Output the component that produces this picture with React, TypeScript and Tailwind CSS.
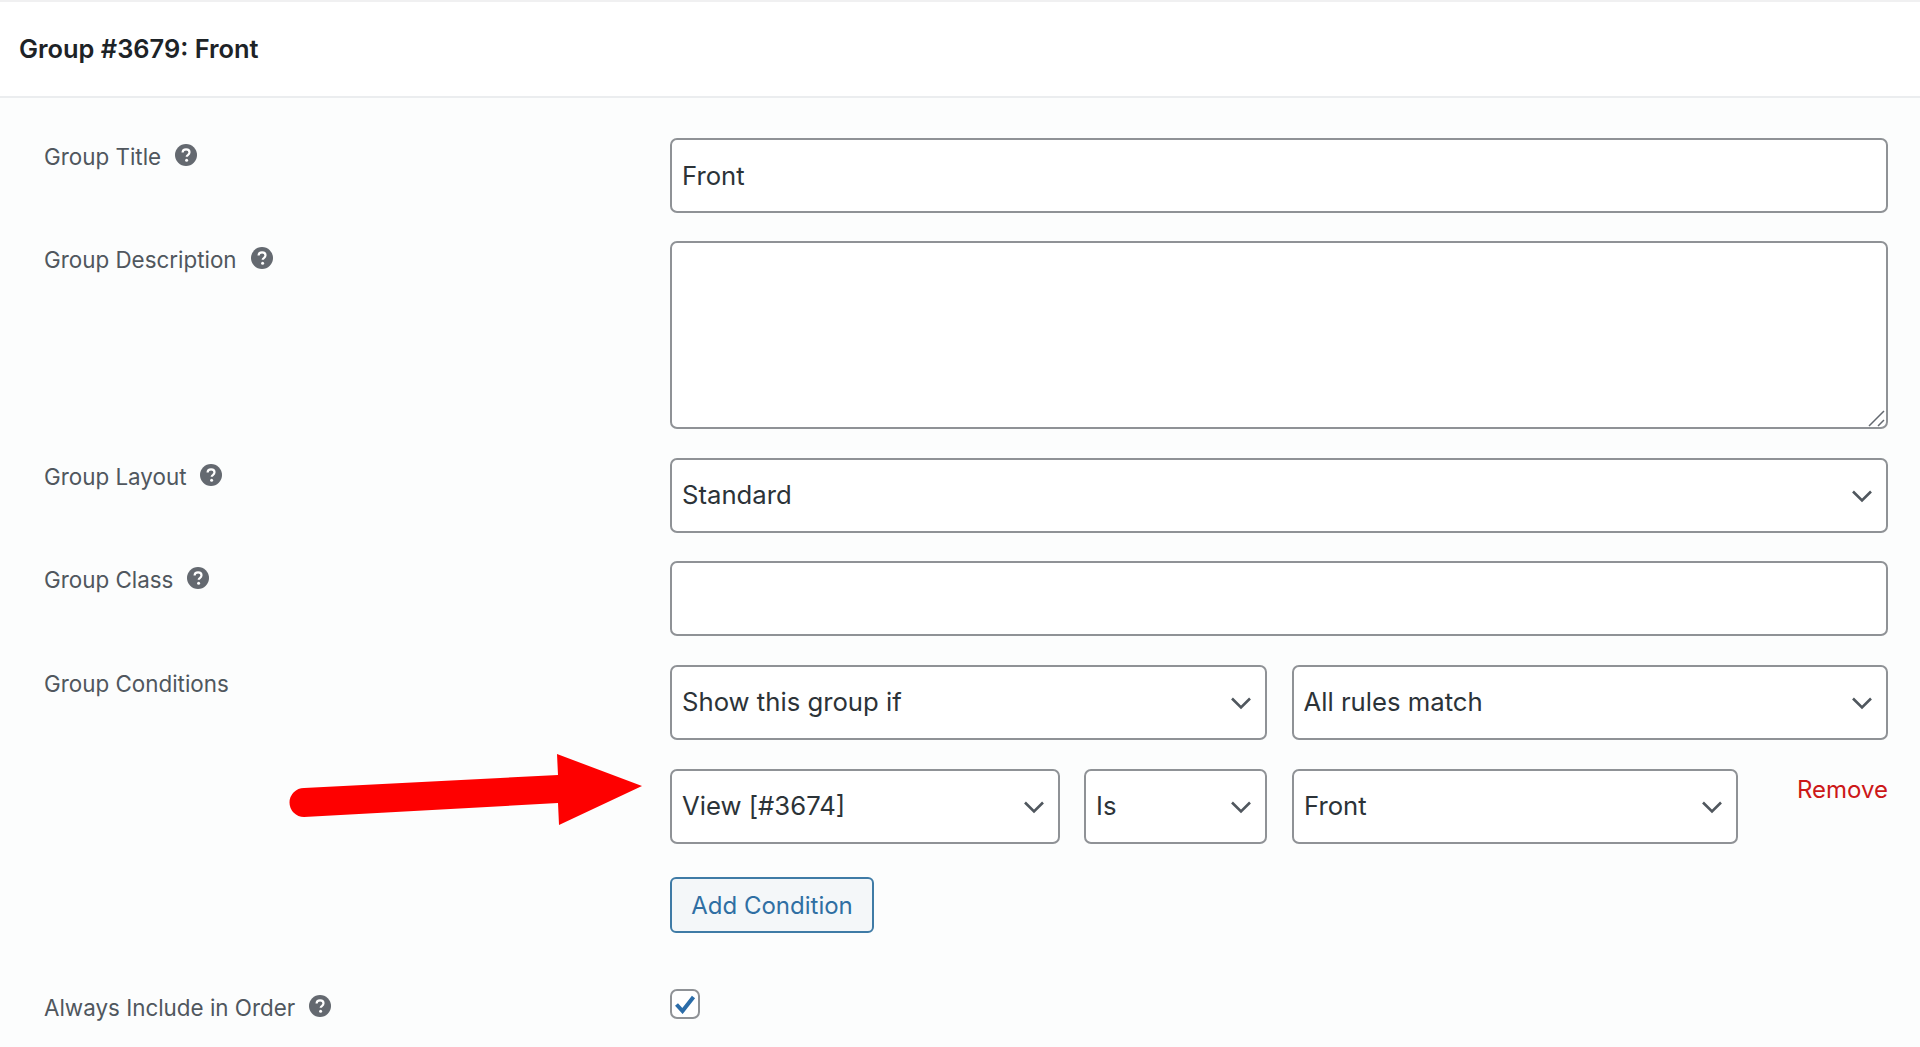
import { ReactNode } from "react";

const fieldClass =
  "w-full h-[75px] bg-white border-2 border-[#8f9296] rounded-[7px] px-[10px] text-[25.7px] text-[#2c3338] outline-none appearance-none";

function Help() {
  return (
    <svg width="22" height="22" viewBox="0 0 22 22" className="ml-[14px] shrink-0 mt-[1px]">
      <circle cx="11" cy="11" r="11" fill="#646970" />
      <path
        d="M7.6 8.6c0-2 1.5-3.3 3.5-3.3s3.4 1.2 3.4 3c0 1.4-.8 2.1-1.7 2.8-.7.5-1.1.9-1.1 1.7"
        fill="none"
        stroke="#fff"
        strokeWidth="2.2"
      />
      <circle cx="11.6" cy="16.3" r="1.5" fill="#fff" />
    </svg>
  );
}

function Row({ label, help = true, className = "", children }: { label: string; help?: boolean; className?: string; children: ReactNode }) {
  return (
    <div className={`flex ${className}`}>
      <div className="w-[626px] shrink-0 flex items-start pt-[5px] text-[22.4px] leading-[28px] text-[#50575e]">
        <span>{label}</span>
        {help && <Help />}
      </div>
      <div className="flex-1 min-w-0">{children}</div>
    </div>
  );
}

function Select({ value, className = "" }: { value: string; className?: string }) {
  return (
    <div className={`relative ${className}`}>
      <select defaultValue={value} className={fieldClass}>
        <option>{value}</option>
      </select>
      <svg width="22" height="14" viewBox="0 0 22 14" className="absolute right-[15px] top-[31px] pointer-events-none">
        <path d="M2 2.5l9 9 9-9" fill="none" stroke="#50575e" strokeWidth="2.6" />
      </svg>
    </div>
  );
}

export default function App() {
  return (
    <div className="relative h-[1047px] overflow-hidden bg-[#fcfdfd] font-['Inter','Liberation_Sans',sans-serif]">
      <header className="h-[98px] bg-white border-t-2 border-b-2 border-t-[#f0f0f1] border-b-[#ebedef] flex items-center pl-[19px]">
        <h1 className="text-[25.4px] font-semibold text-[#1d2327]">Group #3679: Front</h1>
      </header>

      <div className="pl-[44px] pr-[32px] pt-[40px]">
        <Row label="Group Title">
          <input defaultValue="Front" className={fieldClass} />
        </Row>
        <Row label="Group Description" className="mt-[28px]">
          <div className="relative">
            <textarea className="block w-full h-[188px] bg-white border-2 border-[#8f9296] rounded-[7px] px-[10px] py-[8px] text-[25.7px] text-[#2c3338] outline-none resize-none" />
            <svg width="18" height="18" viewBox="0 0 18 18" className="absolute right-[2px] bottom-[2px] pointer-events-none">
              <path d="M1 17L16 2M10 17L16 11" fill="none" stroke="#646970" strokeWidth="1.5" />
            </svg>
          </div>
        </Row>
        <Row label="Group Layout" className="mt-[29px]">
          <Select value="Standard" />
        </Row>
        <Row label="Group Class" className="mt-[28px]">
          <input className={fieldClass} />
        </Row>
        <Row label="Group Conditions" help={false} className="mt-[29px]">
          <div className="flex gap-[25px]">
            <Select value="Show this group if" className="flex-1" />
            <Select value="All rules match" className="flex-1" />
          </div>
          <div className="flex items-start gap-[25px] mt-[29px]">
            <Select value="View [#3674]" className="w-[390px]" />
            <Select value="Is" className="w-[183px] -ml-px" />
            <Select value="Front" className="w-[446px]" />
            <a className="ml-auto pt-[3px] text-[24px] leading-[36px] text-[#cc1818]">Remove</a>
          </div>
          <button className="block mt-[33px] h-[56px] w-[204px] bg-[#f4f7f9] border-2 border-[#3f7ba6] rounded-[6px] pt-[2px] text-[24px] text-[#2f6fa3]">
            Add Condition
          </button>
        </Row>
        <Row label="Always Include in Order" className="mt-[56px]">
          <span className="flex items-center justify-center w-[30px] h-[30px] bg-white border-2 border-[#8f9296] rounded-[7px]">
            <svg width="22" height="20" viewBox="0 0 22 20">
              <path d="M2.5 10.5l6 6.5L19.5 3" fill="none" stroke="#2b6ca8" strokeWidth="4" />
            </svg>
          </span>
        </Row>
      </div>

      {/* annotation arrow */}
      <svg width="1920" height="1047" className="absolute inset-0 pointer-events-none">
        <path
          d="M304 788L558 775L557 754L642 786L559 825L558 803L304 817A14.5 14.5 0 0 1 304 788Z"
          fill="#fe0000"
        />
      </svg>
    </div>
  );
}
